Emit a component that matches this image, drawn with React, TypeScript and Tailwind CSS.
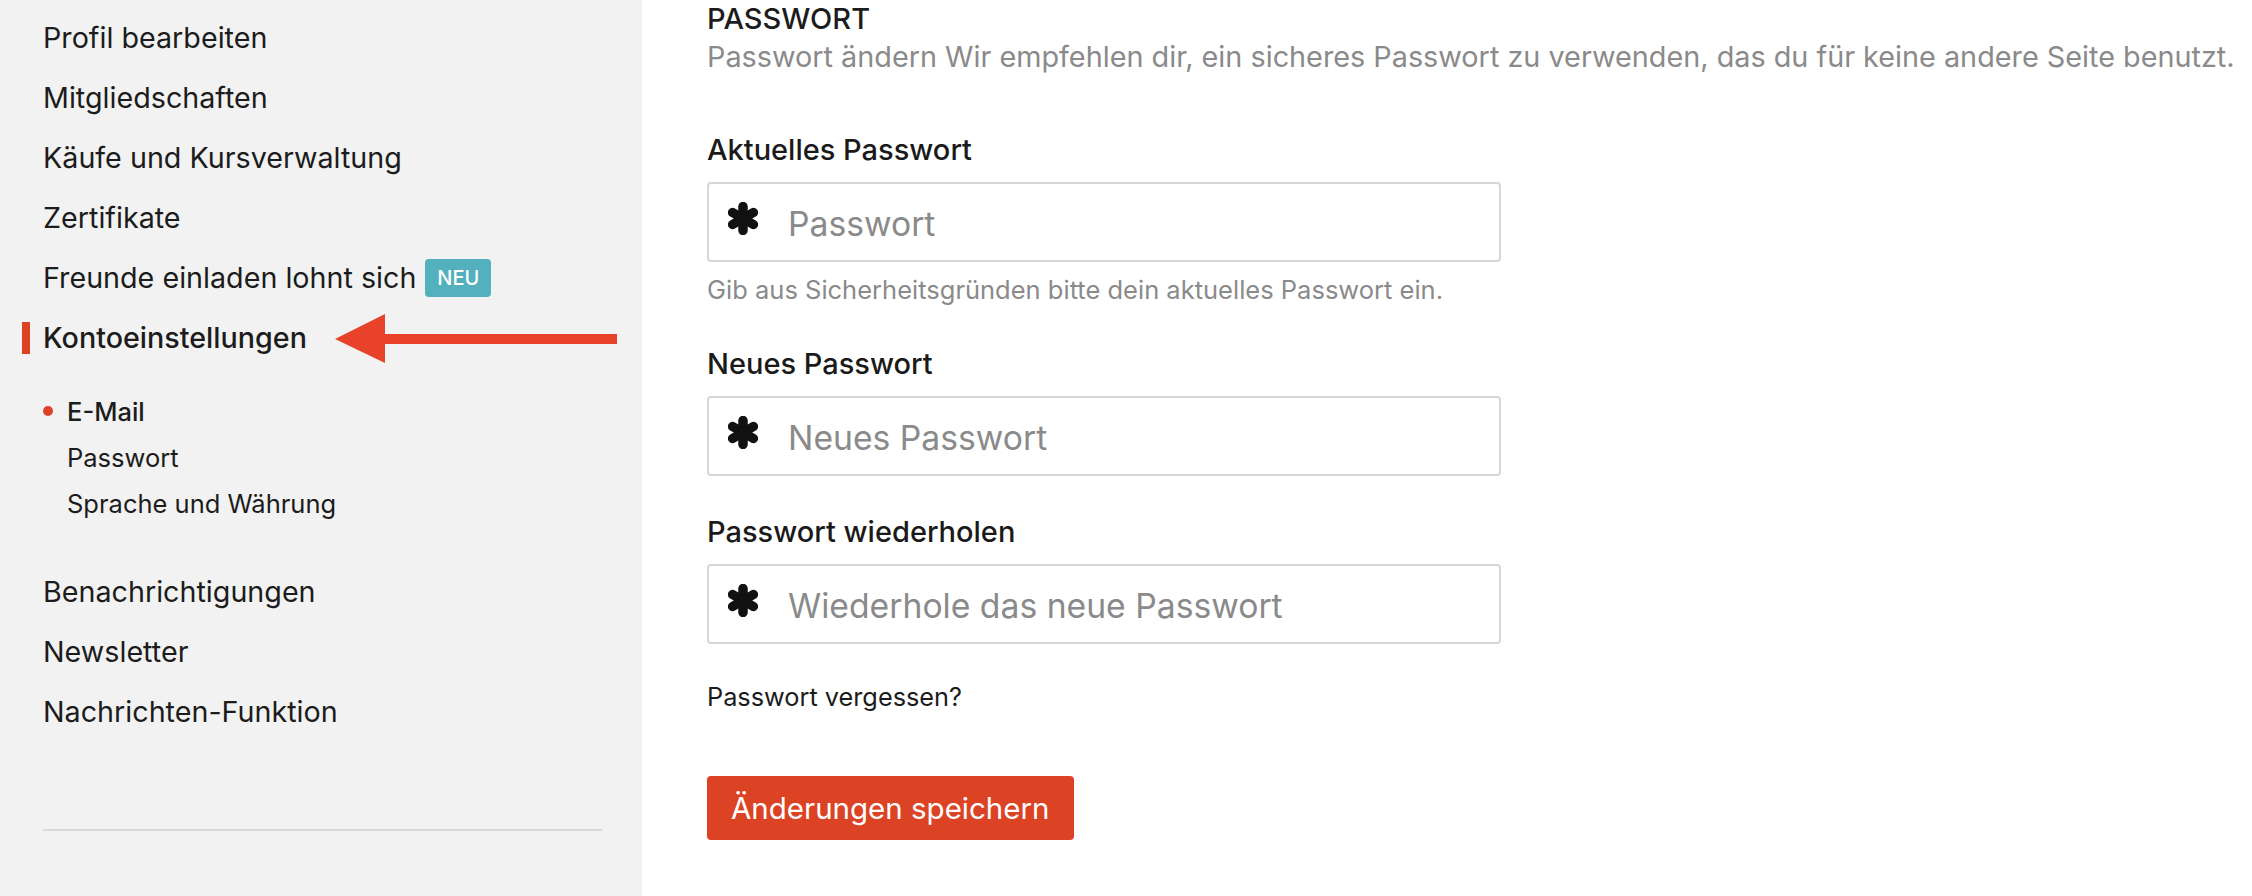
import React from "react";

const font = { fontFamily: "Inter, 'Noto Sans', sans-serif" };

function Asterisk() {
  return (
    <svg width="30" height="33" viewBox="0 0 30 33" className="shrink-0 -mt-[8px]">
      <g stroke="#111" strokeWidth="9.5" strokeLinecap="round">
        <line x1="15" y1="4.5" x2="15" y2="28.5" />
        <line x1="4.6" y1="10.5" x2="25.4" y2="22.5" />
        <line x1="4.6" y1="22.5" x2="25.4" y2="10.5" />
      </g>
    </svg>
  );
}

function Arrow() {
  return (
    <svg width="282" height="50" viewBox="0 0 282 50" className="absolute left-[292px] top-[6px]">
      <polygon points="0,25 50,0 50,49" fill="#e8432a" />
      <rect x="48" y="20" width="234" height="10" fill="#e8432a" />
    </svg>
  );
}

function PasswordField({ label, placeholder, help }: { label: string; placeholder: string; help?: string }) {
  return (
    <div className="flex flex-col">
      <label className="text-[29px] leading-[36px] font-medium text-[#1a1a1a]">{label}</label>
      <div className="mt-[14px] w-[794px] h-[80px] border-2 border-[#d6d6d6] rounded-[4px] flex items-center pl-[19px] gap-[30px] bg-white">
        <Asterisk />
        <input
          type="password"
          placeholder={placeholder}
          className="flex-1 bg-transparent outline-none text-[33.7px] pt-[5px] placeholder:text-[#8a8a8a] text-[#1a1a1a]"
          style={font}
        />
      </div>
      {help && <p className="mt-[13px] text-[25.5px] leading-[30px] text-[#8a8a8a]">{help}</p>}
    </div>
  );
}

const topItems = ["Profil bearbeiten", "Mitgliedschaften", "Käufe und Kursverwaltung", "Zertifikate"];
const bottomItems = ["Benachrichtigungen", "Newsletter", "Nachrichten-Funktion"];
const subItems = ["E-Mail", "Passwort", "Sprache und Währung"];

export default function App() {
  return (
    <div className="flex w-[2252px] h-[896px] bg-white text-[#1c1c1c]" style={font}>
      <aside className="w-[642px] shrink-0 h-full bg-[#f2f2f2] pt-[8px] pl-[43px] pr-[40px]">
        <nav className="flex flex-col text-[28.7px]">
          {topItems.map((item) => (
            <a key={item} className="h-[60px] flex items-center">
              {item}
            </a>
          ))}
          <a className="h-[60px] flex items-center">
            Freunde einladen lohnt sich
            <span className="ml-[9px] h-[38px] w-[66px] rounded-[4px] bg-[#52b1bc] text-white text-[20px] font-medium flex items-center justify-center">
              NEU
            </span>
          </a>
          <a className="relative h-[60px] flex items-center font-medium">
            <span className="absolute -left-[21px] top-[14px] w-[8px] h-[32px] bg-[#dc4324]" />
            Kontoeinstellungen
            <Arrow />
          </a>
          <div className="mt-[21px] flex flex-col text-[25.5px]">
            {subItems.map((item, i) => (
              <a key={item} className={`relative h-[46px] flex items-center pl-[24px] ${i === 0 ? "font-medium" : ""}`}>
                {i === 0 && <span className="absolute left-0 top-[17px] w-[10px] h-[10px] rounded-full bg-[#dc4324]" />}
                {item}
              </a>
            ))}
          </div>
          <div className="mt-[35px] flex flex-col">
            {bottomItems.map((item) => (
              <a key={item} className="h-[60px] flex items-center">
                {item}
              </a>
            ))}
          </div>
        </nav>
        <div className="mt-[87px] h-[2px] bg-[#d9d9d9]" />
      </aside>

      <main className="flex-1 pl-[65px]">
        <h2 className="text-[29px] leading-[36px] font-medium mt-[1px]">PASSWORT</h2>
        <p className="mt-[2px] text-[28.8px] leading-[36px] text-[#8a8a8a] whitespace-nowrap">
          Passwort ändern Wir empfehlen dir, ein sicheres Passwort zu verwenden, das du für keine andere Seite benutzt.
        </p>
        <div className="mt-[57px] flex flex-col">
          <PasswordField
            label="Aktuelles Passwort"
            placeholder="Passwort"
            help="Gib aus Sicherheitsgründen bitte dein aktuelles Passwort ein."
          />
          <div className="mt-[41px]">
            <PasswordField label="Neues Passwort" placeholder="Neues Passwort" />
          </div>
          <div className="mt-[38px]">
            <PasswordField label="Passwort wiederholen" placeholder="Wiederhole das neue Passwort" />
          </div>
        </div>
        <a className="block mt-[37px] text-[25.3px] leading-[32px] text-[#1c1c1c]">Passwort vergessen?</a>
        <button className="mt-[63px] h-[64px] px-[24px] rounded-[4px] bg-[#dc4324] text-white text-[29.5px]">
          Änderungen speichern
        </button>
      </main>
    </div>
  );
}
